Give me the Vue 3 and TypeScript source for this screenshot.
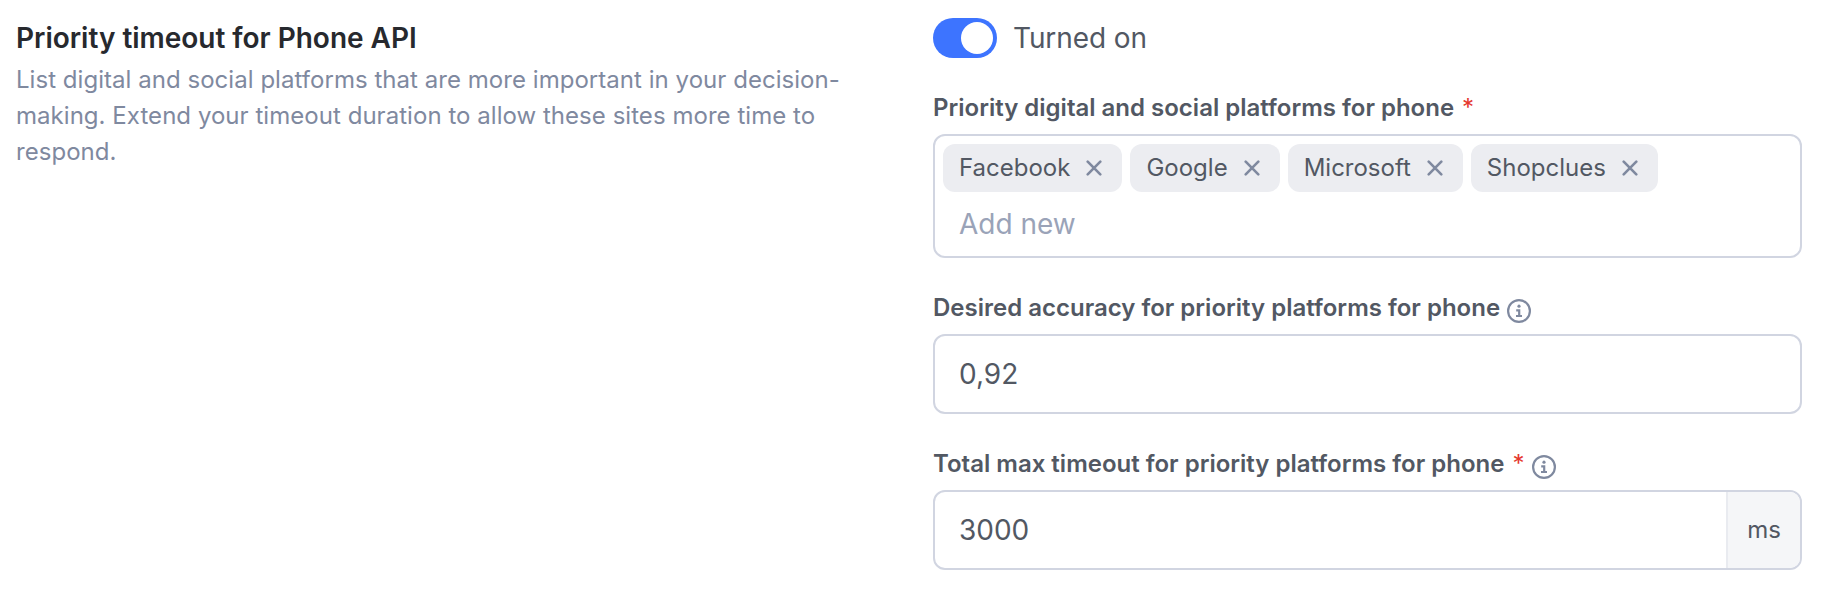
<script setup lang="ts">
import { ref } from 'vue'

const platforms = ref<string[]>(['Facebook', 'Google', 'Microsoft', 'Shopclues'])
const enabled = ref(true)
const accuracy = ref('0,92')
const timeout = ref('3000')
function remove(name: string) {
  platforms.value = platforms.value.filter((p) => p !== name)
}
</script>

<template>
  <main class="settings">
    <section class="intro">
      <h2>Priority timeout for Phone API</h2>
      <p>List digital and social platforms that are more important in your decision-making. Extend your timeout duration to allow these sites more time to respond.</p>
    </section>
    <section class="form">
      <div class="switch-row">
        <button class="switch" :class="{ on: enabled }" role="switch" :aria-checked="enabled" @click="enabled = !enabled"><span class="knob"></span></button>
        <span class="switch-text">Turned on</span>
      </div>

      <div class="label">Priority digital and social platforms for phone <span class="req">*</span></div>
      <div class="box tags">
        <div class="tag-row">
          <span v-for="p in platforms" :key="p" class="tag">{{ p }}
            <svg class="x" viewBox="0 0 16 16" @click="remove(p)"><path d="M1.7 1.7l12.6 12.6M14.3 1.7L1.7 14.3" /></svg>
          </span>
        </div>
        <div class="add">Add new</div>
      </div>

      <div class="label">Desired accuracy for priority platforms for phone
        <svg class="info" viewBox="0 0 24 24"><circle cx="12" cy="12" r="10.9" /><circle class="dot" cx="12" cy="7.2" r="1.6" /><path d="M9.2 11.3h3v5.6M9 17h6" /></svg>
      </div>
      <div class="box field">{{ accuracy }}</div>

      <div class="label">Total max timeout for priority platforms for phone <span class="req">*</span>
        <svg class="info after-req" viewBox="0 0 24 24"><circle cx="12" cy="12" r="10.9" /><circle class="dot" cx="12" cy="7.2" r="1.6" /><path d="M9.2 11.3h3v5.6M9 17h6" /></svg>
      </div>
      <div class="box field">{{ timeout }}<span class="unit">ms</span></div>
    </section>
  </main>
</template>

<style>
body { background: #fff; }
</style>

<style scoped>
.settings { box-sizing: border-box; width: 1822px; height: 594px; padding: 18px 20px 0 16px; display: grid; grid-template-columns: 850px 869px; column-gap: 67px; font-family: Inter, "Liberation Sans", sans-serif; color: #525863; }
h2 { margin: 0; font-size: 28px; line-height: 40px; font-weight: 600; letter-spacing: -0.02px; color: #27292e; }
p { margin: 4px 0 0; font-size: 24px; line-height: 36px; letter-spacing: 0.04px; color: #7f899f; }
.switch-row { display: flex; align-items: center; height: 40px; gap: 16px; }
.switch { box-sizing: border-box; width: 64px; height: 40px; border: 0; border-radius: 20px; padding: 4px; background: #aab; display: flex; }
.switch.on { background: #3d74ff; justify-content: flex-end; }
.knob { width: 32px; height: 32px; border-radius: 50%; background: #fff; }
.switch-text { font-size: 28px; letter-spacing: -0.1px; }
.label { display: flex; align-items: center; height: 36px; line-height: 36px; font-size: 24px; font-weight: 600; margin-top: 32px; margin-bottom: 8px; gap: 8px; white-space: nowrap; }
.req { color: #e5382f; font-weight: 400; }
.box { box-sizing: border-box; border: 2px solid #d1d5e1; border-radius: 12px; width: 869px; }
.tags { height: 124px; padding: 8px; }
.tag-row { display: flex; gap: 8px; }
.tag { box-sizing: border-box; height: 48px; line-height: 48px; padding: 0 20px 0 16px; border-radius: 12px; background: #ecedf1; display: flex; align-items: center; gap: 16px; font-size: 24px; }
.x { width: 16px; height: 16px; fill: none; stroke: #7f899f; stroke-width: 2.6; stroke-linecap: round; }
.add { margin: 12px 0 0 16px; font-size: 28px; line-height: 40px; color: #9aa3b8; }
.field { height: 80px; padding-left: 24px; display: flex; align-items: center; justify-content: space-between; font-size: 28px; overflow: hidden; }
.unit { box-sizing: border-box; width: 74px; height: 76px; line-height: 76px; border-left: 2px solid #e9ebf0; background: #f5f6f8; text-align: center; font-size: 24px; }
.info { width: 24px; height: 24px; margin: 6px 0 0 -1px; fill: none; stroke: #7f899f; stroke-width: 2.2; }
.info.after-req { margin-left: 0; }
.dot { fill: #7f899f; stroke: none; }
</style>
